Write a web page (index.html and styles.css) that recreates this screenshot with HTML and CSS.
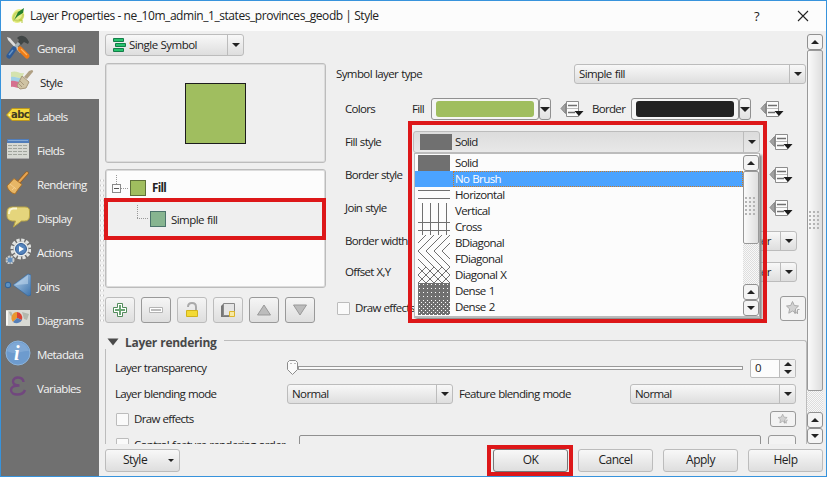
FILE: index.html
```html
<!DOCTYPE html>
<html lang="en">
<head>
<meta charset="utf-8">
<title>Layer Properties</title>
<link rel="stylesheet" href="styles.css">
</head>
<body>
<svg class="defs" width="0" height="0" aria-hidden="true">
  <defs>
    <linearGradient id="steel" x1="0" y1="0" x2="1" y2="1"><stop offset="0" stop-color="#b9d3ea"/><stop offset="1" stop-color="#3c73ad"/></linearGradient>
    <symbol id="override" viewBox="0 0 24 18">
      <path d="M5.500 3.500 1 8.500l4.500 5z" fill="#a0a0a0" stroke="#888"/>
      <path d="M6.500 1.500h12v15h-12z" fill="#fcfcfc" stroke="#8c8c8c"/>
      <path d="M8 5.500h9M8 12.500h7" stroke="#707070" stroke-width="1.400"/><path d="M7 8.500h11" stroke="#bbb"/>
      <path d="M14.500 11h9l-4.500 5z" fill="#1c1c1c"/>
    </symbol>
    <symbol id="star" viewBox="0 0 16 16">
      <path d="M7.500 1.500l1.800 4 4.200.5-3.100 2.900.8 4.300-3.700-2.200-3.700 2.200.8-4.300L1.500 6l4.200-.5z" fill="#d2d2d2" stroke="#aaa"/>
      <path d="M10 10v4M9 12.500h2.500M12.500 14V9.500h2" fill="none" stroke="#aaa"/>
    </symbol>
    <pattern id="d1" width="4" height="4" patternUnits="userSpaceOnUse"><path d="M0 0h4v4H0z" fill="#707070"/><path d="M1 1h1v1H1z" fill="#fff"/></pattern>
    <pattern id="d2" width="4" height="4" patternUnits="userSpaceOnUse"><path d="M0 0h4v4H0z" fill="#707070"/><path d="M1 1h1v1H1zM3 3h1v1H3z" fill="#fff"/></pattern>
  </defs>
</svg>
<div class="window">
  <header class="titlebar">
    <svg class="logo" viewBox="0 0 16 18"><path d="M4 5C8 0 13 2 14 6s-1 9-6 10S-1 11 4 5z" fill="#e9f08c"/><path d="M4 14C2 10 5 5 9 5M5 13c4 2 8-1 8-6" fill="none" stroke="#c7d560" stroke-width="2"/><path d="M4 13 8 5l6-4-1 5-5 3z" fill="#25802c"/><path d="M9 13h3v3" stroke="#b6c83a" fill="none"/></svg>
    <span class="title">Layer Properties - ne_10m_admin_1_states_provinces_geodb | Style</span>
    <span class="help">?</span>
    <svg class="close" viewBox="0 0 12 12"><path d="M1 1l10 10M11 1 1 11" stroke="#222" stroke-width="1.100"/></svg>
  </header>
  <div class="body">
    <nav class="sidebar">
      <div class="nav"><svg viewBox="0 0 26 26"><path d="M2 3l3 1 12 14-2 1L3 6z" fill="#dedede"/><path d="M12 4c4-4 9-3 12 4l-1 2-4-2-3 3-3-3 1-2z" fill="#414646"/><path d="M14 9 8 16" stroke="#aab4b8" stroke-width="3"/><path d="M9 15 4 22" stroke="#2e5b98" stroke-width="5" stroke-linecap="round"/><path d="M8 16 4 21" stroke="#6694c5" stroke-width="1.500"/><path d="M15 15l7 7" stroke="#f07c16" stroke-width="5" stroke-linecap="round"/><path d="M16 15l6 6" stroke="#ffb25c" stroke-width="1.200"/></svg><span>General</span></div>
      <div class="nav active"><svg viewBox="0 0 26 26"><path d="M3 4c6-2 8 2 13 1l-2 5C11 11 6 8 3 10z" fill="#d5e3ae"/><path d="M3 9c4-1 8 2 12 1v4c-4 1-8-1-12-1z" fill="#9fd0e6"/><path d="M3 13c4-1 8 2 12 1l-1 6c-4 1-8-2-11-1z" fill="#d5708f"/><path d="M24 2c2 1 1 2 0 3l-5 6-3-2 5-6z" fill="#b0a084"/><path d="M14 8l7 6-3 6-6 1-3-3z" fill="#cfc3a4" stroke="#a8987a"/><path d="M12 13l4 4M11 16l3 3" stroke="#a8987a"/></svg><span>Style</span></div>
      <div class="nav"><svg viewBox="0 0 26 26"><path d="M1.500 13 7 6.500h17.500v12H7z" fill="#f4d93d" stroke="#bd981d"/><circle cx="4.500" cy="13" r="1" fill="#fff5ae"/><text x="6" y="15.500" class="abc">abc</text></svg><span>Labels</span></div>
      <div class="nav"><svg viewBox="0 0 26 26"><path d="M2 3h22v20H2z" fill="#d6d8d2"/><path d="M2 3h22v4H2z" fill="#507dba"/><path d="M3 4.500h20" stroke="#83a9d7"/><path d="M3 9.500h20M3 12.500h20M3 15.500h20M3 18.500h20" stroke="#a0a49c" stroke-dasharray="4 1"/><path d="M2 22.500h22" stroke="#aaa"/></svg><span>Fields</span></div>
      <div class="nav"><svg viewBox="0 0 26 26"><path d="M22 3 13 13" stroke="#98601f" stroke-width="3.500" stroke-linecap="round"/><path d="M22 3 13 13" stroke="#e7a452" stroke-width="2" stroke-linecap="round"/><path d="M9 8.500l8 6-4 5-3 4.500c-4-1-7-4-8-8z" fill="#e7b666" stroke="#ab7129"/><path d="M5 14l6 5M7 20l3-3" stroke="#f5ce8c"/></svg><span>Rendering</span></div>
      <div class="nav"><svg viewBox="0 0 26 26"><path d="M7 3h13q4.500 0 4.500 4v5q0 5-5 5h-3l-8 6 2-6H7q-5-1-5-5V8q0-5 5-5z" fill="#e5d57c" stroke="#b7a346"/><path d="M4 10q0-5 4-5.500h4" fill="none" stroke="#fbf6d3" stroke-width="2"/></svg><span>Display</span></div>
      <div class="nav"><svg viewBox="0 0 26 26"><circle cx="16" cy="11" r="9" fill="none" stroke="#e1e3e1" stroke-width="3" stroke-dasharray="3.200 1.500"/><circle cx="16" cy="11" r="7.500" fill="#e8eae8"/><circle cx="16" cy="11" r="5.500" fill="#5484bc" stroke="#315b94"/><path d="M14 8l5 3-5 3z" fill="#fff"/><circle cx="5" cy="22" r="3.500" fill="#628fbe" stroke="#c9cac9" stroke-width="2" stroke-dasharray="2 .8"/></svg><span>Actions</span></div>
      <div class="nav"><svg viewBox="0 0 26 26"><path d="M8 13 23 2l3 1v20l-3 1z" fill="url(#steel)" stroke="#31659d" stroke-width=".6"/><path d="M10 13 23 3v9z" fill="#c8ddf1" opacity=".5"/><circle cx="3" cy="13" r="2.800" fill="#5c91c3" stroke="#2c6098"/></svg><span>Joins</span></div>
      <div class="nav"><svg viewBox="0 0 26 26"><path d="M1 4h24v16H1z" fill="#d9dad4"/><path d="M1 5h2v14H1z" fill="#f8f8f5"/><path d="M4 6c3-1 4 2 3 5l-2-2zM17 6l7 2-2 6-3-1zM19 15l4 2" fill="#b4b7ad"/><path d="M12 12V6a6 6 0 0 0-4 10z" fill="#e99831"/><path d="M12 12V6a6 6 0 0 1 5 8z" fill="#d94436"/><path d="M12 12l5 2a6 6 0 0 1-9 2z" fill="#557fb8"/></svg><span>Diagrams</span></div>
      <div class="nav"><svg viewBox="0 0 26 26"><circle cx="13" cy="13" r="12" fill="#6d9bce" stroke="#8db4da"/><path d="M2 11C5 0 20-1 24 11c-7-1-13 5-22 0z" fill="#9abce0" opacity=".4"/><text x="9" y="20" class="info">i</text></svg><span>Metadata</span></div>
      <div class="nav"><svg viewBox="0 0 26 26"><path d="M18.500 8C18 2 8 2 8 7.500c0 3 3 4 6.500 4-5 0-8.500 1-8.500 4.500 0 6 12 6 14 0" fill="none" stroke="#71477e" stroke-width="2.400"/></svg><span>Variables</span></div>
    </nav>
    <main class="main">
      <div class="scroll">
        <div class="page">
          <div class="upper">
            <div class="splitter"></div>
            <section class="left">
              <div class="combo symbol"><svg width="13" height="14" viewBox="0 0 13 14"><path d="M.5.5h10v3H.500zM2.500 5.500h10v3h-10zM.5 10.500h10v3H.500z" fill="#27c26c" stroke="#147d49"/></svg><span class="grow">Single Symbol</span><i class="drop"></i></div>
              <div class="preview"><div class="sample"></div></div>
              <div class="tree">
                <div class="leaf root"><svg width="22" height="28" viewBox="0 0 22 28" shape-rendering="crispEdges"><path d="M8.500 1v10M13 14.500h8" stroke="#999" stroke-dasharray="1 1"/><path d="M4.500 10.500h8v8h-8z" fill="#fcfcfc" stroke="#8a8a8a"/><path d="M6 14.500h5" stroke="#555"/></svg><b class="sw green"></b><strong>Fill</strong></div>
                <div class="leaf child"><svg width="12" height="32" viewBox="0 0 12 32" shape-rendering="crispEdges"><path d="M.5 2v14M0 15.500h11" stroke="#999" stroke-dasharray="1 1" fill="none"/></svg><b class="sw teal"></b><span>Simple fill</span></div>
                <div class="mark mark-tree"></div>
              </div>
              <div class="tools">
                <button class="tool light"><svg viewBox="0 0 16 16"><path d="M5.500 1.500h5v4h4v5h-4v4h-5v-4h-4v-5h4z" fill="#fff" stroke="#538c5c"/><path d="M8 3v10M3 8h10" stroke="#6aa473" stroke-width="2"/></svg></button>
                <button class="tool"><svg viewBox="0 0 16 16"><path d="M1.500 5.500h13v5h-13z" fill="#fff" stroke="#b4b4b4"/><path d="M3 8h10" stroke="#bbb" stroke-width="2"/></svg></button>
                <button class="tool light"><svg viewBox="0 0 16 16"><path d="M4 5q0-4 4-4t4 4v3" fill="none" stroke="#aaa" stroke-width="2"/><path d="M2.500 8.500h11v6h-11z" fill="#f3da35" stroke="#d1b31c"/></svg></button>
                <button class="tool light"><svg viewBox="0 0 16 16"><path d="M1 4l2-2v11h9l-2 2H1z" fill="#777"/><path d="M3.500 1.500h11v12h-11z" fill="#e5e5e5" stroke="#888"/><path d="M9.500 9.500h5v5h-5z" fill="#f7e9a3" stroke="#dcb52b"/></svg></button>
                <button class="tool"><svg viewBox="0 0 16 16"><path d="M8 3l6.500 10h-13z" fill="#bcbcbc" stroke="#999"/></svg></button>
                <button class="tool"><svg viewBox="0 0 16 16"><path d="M8 13l6.500-10h-13z" fill="#bcbcbc" stroke="#999"/></svg></button>
              </div>
            </section>
            <section class="form">
              <div class="row type"><label>Symbol layer type</label><div class="combo"><span class="grow">Simple fill</span><i class="drop"></i></div></div>
              <div class="row colors"><label class="name">Colors</label><label class="lfill">Fill</label><div class="color"><i class="fillc"></i></div><i class="colordrop"></i><svg class="ov"><use href="#override"/></svg><label class="lborder">Border</label><div class="color"><i class="dark"></i></div><i class="colordrop"></i><svg class="ov"><use href="#override"/></svg></div>
              <div class="row r33 fillstyle"><label class="name">Fill style</label>
                <div class="pick">
                  <div class="combo pressed"><b class="solid"></b><span class="grow">Solid</span><i class="drop"></i></div>
                  <div class="popup">
                    <ul>
                      <li><svg><path d="M0 0h32v16H0z" fill="#707070"/></svg><span>Solid</span></li>
                      <li class="sel"><svg></svg><span>No Brush</span></li>
                      <li><svg><path d="M0 3.500h32M0 11.500h32"/></svg><span>Horizontal</span></li>
                      <li><svg><path d="M4.500 0v16M12.500 0v16M20.500 0v16M28.500 0v16"/></svg><span>Vertical</span></li>
                      <li><svg><path d="M4.500 0v16M12.500 0v16M20.500 0v16M28.500 0v16M0 3.500h32M0 11.500h32"/></svg><span>Cross</span></li>
                      <li><svg><path d="M8 0-8 16M16 0 0 16M24 0 8 16M32 0 16 16M40 0 24 16"/></svg><span>BDiagonal</span></li>
                      <li><svg><path d="M-8 0 8 16M0 0 16 16M8 0l16 16M16 0l16 16M24 0l16 16"/></svg><span>FDiagonal</span></li>
                      <li><svg><path d="M8 0-8 16M16 0 0 16M24 0 8 16M32 0 16 16M40 0 24 16M-8 0 8 16M0 0 16 16M8 0l16 16M16 0l16 16M24 0l16 16"/></svg><span>Diagonal X</span></li>
                      <li><svg><rect width="32" height="16" fill="url(#d1)" stroke="none"/></svg><span>Dense 1</span></li>
                      <li><svg><rect width="32" height="16" fill="url(#d2)" stroke="none"/></svg><span>Dense 2</span></li>
                    </ul>
                    <div class="bar"><i class="btn up"></i><i class="thumb"><i class="grip"></i></i><i class="track"></i><i class="btn up"></i><i class="btn down"></i></div>
                  </div>
                  <div class="mark mark-pick"></div>
                </div>
                <svg class="ov"><use href="#override"/></svg></div>
              <div class="row r33"><label class="name">Border style</label><svg class="ov"><use href="#override"/></svg></div>
              <div class="row r33 join"><label class="name">Join style</label><svg class="ov"><use href="#override"/></svg></div>
              <div class="row r31"><label class="name">Border width</label><div class="combo unit"><span class="grow">Millimeter</span><i class="drop"></i></div></div>
              <div class="row r31"><label class="name">Offset X,Y</label><div class="combo unit"><span class="grow">Millimeter</span><i class="drop"></i></div></div>
              <div class="row effects"><i class="check"></i><label>Draw effects</label><button class="starbtn"><svg viewBox="0 0 16 16"><use href="#star"/></svg></button></div>
            </section>
          </div>
          <section class="group">
            <h2><svg width="12" height="8" viewBox="0 0 12 8"><path d="M.5.5h11L6 7.500z" fill="#4a4a4a"/></svg><span>Layer rendering</span><i class="line"></i></h2>
            <div class="gbody">
              <div class="grow-row transp"><label>Layer transparency</label><div class="slider"><svg width="12" height="16" viewBox="0 0 12 16"><path d="M2.500.5h6l2 2v7l-5 5-5-5v-7z" fill="#fafafa" stroke="#8c8c8c"/><path d="M3 3.500h2M7 3.500h2" stroke="#bbb"/></svg><i class="rail"></i></div><div class="spin"><span>0</span><div class="steps"><i class="up"></i><i class="down"></i></div></div></div>
              <div class="grow-row blend"><label>Layer blending mode</label><div class="combo"><span class="grow">Normal</span><i class="drop"></i></div><label class="feature">Feature blending mode</label><div class="combo"><span class="grow">Normal</span><i class="drop"></i></div></div>
              <div class="grow-row fx"><i class="check"></i><label>Draw effects</label><button class="starbtn small"><svg viewBox="0 0 16 16"><use href="#star"/></svg></button></div>
              <div class="grow-row order"><i class="check"></i><label>Control feature rendering order</label><div class="edit"></div><div class="more"></div></div>
            </div>
          </section>
        </div>
        <div class="bar outer"><i class="btn up"></i><i class="thumb"><i class="grip"></i></i><i class="track"></i><i class="btn up"></i><i class="btn down"></i></div>
      </div>
      <footer class="footer">
        <button class="push stylebtn"><span>Style</span><i></i></button>
        <div class="okwrap"><button class="push ok">OK</button><div class="mark mark-ok"></div></div>
        <button class="push">Cancel</button><button class="push">Apply</button><button class="push">Help</button>
      </footer>
    </main>
  </div>
</div>
</body>
</html>
```
FILE: styles.css
```css
* { box-sizing: border-box; }
body { margin: 0; overflow: hidden; font: 11.5px/16px "Open Sans", "Noto Sans", sans-serif; letter-spacing: -0.68px; word-spacing: 0.6px; color: #222; }
i, b { font-style: normal; display: block; flex: none; }
svg { display: block; flex: none; }
label, span { white-space: nowrap; }
button { font: inherit; letter-spacing: inherit; color: inherit; padding: 0; }
.defs { position: absolute; }
.window { width: 827px; height: 477px; border: 1px solid #3793dc; background: #efefef; display: flex; flex-direction: column; }
.titlebar { height: 30px; background: #fcfcfc; display: flex; align-items: center; flex: none; }
.logo { width: 16px; height: 18px; margin: 0 4px 0 9px; }
.title { font-size: 12px; letter-spacing: -0.44px; word-spacing: 0; flex: 1; }
.help { font-size: 13px; width: 8px; margin-right: 35px; }
.close { width: 12px; height: 12px; margin-right: 17px; }
.body { display: flex; flex: 1; min-height: 0; }
.sidebar { width: 98px; background: #707070; color: #f4f4f4; flex: none; letter-spacing: -0.6px; }
.nav { height: 34px; display: flex; align-items: center; padding: 2px 0 0 4px; gap: 6px; }
.nav svg { width: 26px; height: 26px; margin-top: -4px; }
.active { background: #efefef; color: #222; padding-left: 7px; }
.abc { font: bold 10px "DejaVu Sans", sans-serif; fill: #403b22; letter-spacing: -0.6px; }
.info { font: italic bold 20px "Liberation Serif", serif; fill: #fff; }
.main { flex: 1; display: flex; flex-direction: column; min-width: 0; }
.scroll { height: 413px; display: flex; overflow: hidden; }
.page { width: 708px; }
.upper { display: flex; height: 304px; }
.splitter { width: 5px; margin: 147px 1px 12px 0; background: radial-gradient(circle, #fff 0 1px, #c5c5c5 1.500px, transparent 2px) 1px 0/4px 5px repeat-y; }
.left { width: 221px; padding-top: 3px; flex: none; }
.combo { height: 21px; border: 1px solid #bcbcbc; border-radius: 3px; background: linear-gradient(#f8f8f8, #dedede); display: flex; align-items: center; padding-left: 4px; }
.grow { flex: 1; }
.drop { width: 16px; align-self: stretch; border-left: 1px solid #bcbcbc; }
.drop, .colordrop, .btn, .steps i { display: flex; align-items: center; justify-content: center; }
.drop::after, .colordrop::after, .down::after { content: ""; border: 4px solid transparent; border-top-color: #222; border-bottom: 0; }
.up::after { content: ""; border: 4px solid transparent; border-bottom-color: #222; border-top: 0; }
.symbol { width: 139px; height: 22px; padding-left: 7px; gap: 3px; letter-spacing: -0.55px; }
.preview { height: 100px; margin-top: 7px; border: 1px solid #bcbcbc; box-shadow: inset 0 0 0 1px #dcdcdc; border-radius: 3px; display: flex; align-items: center; justify-content: center; }
.sample { width: 61px; height: 61px; border: 1px solid #1c1c1c; background: #a0be5f; }
.tree { height: 119px; margin-top: 6px; border: 1px solid #bcbcbc; box-shadow: inset 0 0 0 1px #dcdcdc; padding: 1px; border-radius: 3px; background: #fcfcfc; position: relative; }
.leaf { display: flex; align-items: center; }
.root { height: 31px; padding-left: 1px; padding-top: 2px; }
.child { height: 34px; padding-left: 30px; background: #efefef; }
.sw { width: 16px; height: 16px; margin: 0 6px 0 0; }
.green { background: #a0be5f; border: 1px solid #5f713a; }
.teal { background: #87b590; border: 1px solid #4c746c; margin: 0 5px 0 1px; }
.child span { letter-spacing: -0.55px; margin-top: 1px; }
.mark { position: absolute; border: 4px solid #dd1719; }
.mark-tree { left: -2px; top: 28px; width: 222px; height: 42px; }
.tools { display: flex; gap: 6px; margin-top: 9px; }
.tool { width: 30px; height: 26px; border: 1px solid #999; border-radius: 3px; background: linear-gradient(#f5f5f5, #dedede); display: flex; align-items: center; justify-content: center; }
.light { border-color: #bcbcbc; }
.tool svg { width: 16px; height: 16px; }
.form { margin-left: 10px; width: 470px; padding-top: 33px; flex: none; }
.row { display: flex; align-items: center; padding-left: 1px; }
.type { height: 20px; margin-bottom: 14px; padding-left: 0; letter-spacing: -0.6px; }
.type .combo { width: 232px; margin-left: auto; height: 20px; }
.colors { height: 22px; }
.name { margin-left: 8px; width: 68px; }
.lfill { width: 18px; }
.colors .name { width: 67px; }
.colors .lfill { width: 19px; }
.color { width: 108px; height: 22px; border: 1px solid #909090; border-radius: 3px; background: #f5f5f5; padding: 2px 4px; }
.color i { height: 16px; border-radius: 3px; }
.fillc { background: #a0be5f; }
.dark { background: #222; }
.colordrop { width: 12px; height: 22px; border: 1px solid #909090; border-radius: 3px; background: linear-gradient(#f8f8f8, #e2e2e2); }
.colordrop::after { flex: none; border-width: 5px 5px 0; }
.ov { width: 24px; height: 18px; margin-left: 9px; }
.lborder { width: 39px; margin-left: 8px; }
.r33 { height: 33px; }
.fillstyle { margin-top: 5px; }
.join { margin-bottom: 1px; }
.r33 .ov { margin-left: auto; margin-right: 13px; }
.pick { position: relative; width: 347px; }
.pressed { height: 22px; background: linear-gradient(#dcdcdc, #e8e8e8); padding-left: 6px; }
.solid { width: 32px; height: 16px; background: #707070; margin-right: 3px; }
.popup { position: absolute; z-index: 2; left: 1px; top: 22px; width: 346px; height: 165px; padding-top: 1px; background: #fcfcfc; border: 1px solid #bcbcbc; border-right-color: #aaa; border-bottom: 2px solid #bbb; box-shadow: 2px 2px 2px #8c8c8c; display: flex; }
.popup ul { margin: 0; padding: 0; list-style: none; flex: 1; letter-spacing: -0.62px; }
.popup li { height: 16px; display: flex; align-items: center; padding-left: 3px; gap: 3px; }
.popup li svg { width: 32px; height: 16px; stroke: #707070; fill: none; shape-rendering: crispEdges; }
.popup li span { flex: 1; line-height: 14px; padding: 0 1px; border: 1px solid transparent; }
.popup .sel { background: #4ba3ff; color: #fff; }
.popup .sel span { border: 1px dotted #cd7b24; }
.bar { width: 16px; display: flex; flex-direction: column; }
.btn { height: 16px; border: 1px solid #909090; border-radius: 3px; background: #f4f4f4; }
.thumb { border: 1px solid #999; border-radius: 2px; background: linear-gradient(90deg, #fafafa, #dedede); display: flex; align-items: center; justify-content: center; }
.popup .thumb { height: 73px; }
.grip { width: 12px; height: 20px; background: radial-gradient(circle at 1px 1px, #b4b4b4 1px, transparent 1.300px) 0 0/4px 4px; }
.track { flex: 1; background: repeating-conic-gradient(#ddd 0 25%, #f8f8f8 0 50%) 0 0/2px 2px; }
.mark-pick { left: -5px; top: -10px; width: 359px; height: 202px; z-index: 3; }
.r31 { height: 31px; }
.unit { width: 90px; height: 20px; margin-left: auto; margin-right: 9px; padding-left: 14px; letter-spacing: -0.55px; }
.effects { height: 42px; }
.check { width: 13px; height: 13px; border: 1px solid #bcbcbc; border-radius: 1px; background: #fafafa; margin-right: 5px; }
.starbtn { width: 26px; height: 25px; border: 1px solid #999; border-radius: 3px; background: #f3f3f3; margin-left: auto; display: flex; align-items: center; justify-content: center; }
.starbtn svg { width: 16px; height: 16px; }
.small { height: 16px; }
.small svg { width: 12px; height: 12px; }
.group { padding-left: 6px; }
.group h2 { margin: 0; height: 14px; font-size: 12px; letter-spacing: -0.3px; color: #484848; display: flex; align-items: center; padding-left: 2px; }
.group h2 span { margin: 2px 7px 0 6px; }
.group h2 .line { flex: 1; height: 9px; align-self: flex-end; border-top: 1px solid #bcbcbc; border-right: 1px solid #bcbcbc; border-top-right-radius: 3px; }
.gbody { border-left: 1px solid #bcbcbc; border-right: 1px solid #bcbcbc; height: 100px; padding: 9px 10px 0 9px; }
.grow-row { display: flex; align-items: center; }
.transp { height: 20px; }
.transp label, .blend label { width: 172px; }
.slider { width: 456px; display: flex; align-items: center; }
.rail { height: 4px; border: 1px solid #999; flex: 1; margin-left: -1px; background: #fafafa; }
.spin { width: 46px; height: 19px; margin-left: 7px; border: 1px solid #bcbcbc; border-radius: 2px; background: #fcfcfc; display: flex; padding-left: 4px; justify-content: space-between; }
.steps { width: 16px; border-left: 1px solid #bcbcbc; background: #f0f0f0; }
.steps i { height: 8px; }
.blend { height: 20px; margin-top: 6px; }
.blend .combo { width: 166px; height: 20px; letter-spacing: -0.6px; }
.blend .feature { width: 171px; margin-left: 6px; margin-right: 0; }
.fx { height: 16px; margin-top: 7px; }
.fx .check, .order .check { margin-left: 1px; }
.order { height: 22px; margin-top: 8px; }
.order .check, .order label { margin-top: -3px; }
.edit { width: 462px; height: 22px; border: 1px solid #909090; border-radius: 2px; margin-left: auto; flex: none; }
.more { width: 28px; height: 22px; border: 1px solid #999; border-radius: 3px; margin-left: 7px; background: #f3f3f3; flex: none; }
.outer { margin: 3px 0 0 0; height: 410px; }
.outer .thumb { height: 341px; }
.footer { height: 32px; display: flex; align-items: center; padding: 0 3px 0 6px; gap: 10px; }
.push { width: 75px; height: 23px; border: 1px solid #bcbcbc; border-radius: 3px; background: linear-gradient(#f8f8f8, #dedede); font-size: 12px; letter-spacing: -0.5px; }
.stylebtn { display: flex; align-items: center; justify-content: space-between; padding: 0 5px 0 17px; }
.stylebtn i { border: 3px solid transparent; border-top-color: #222; border-bottom: 0; }
.okwrap { margin-left: auto; position: relative; }
.ok { border-color: #777; display: block; }
.mark-ok { left: -6px; top: -4px; width: 86px; height: 31px; }
```
